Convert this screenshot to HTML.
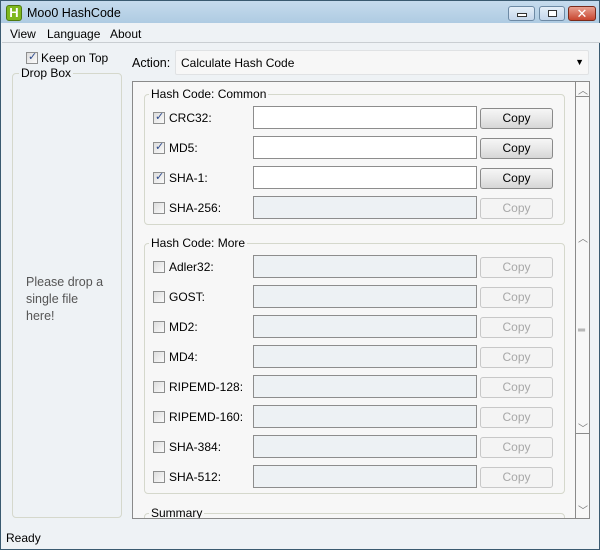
<!DOCTYPE html>
<html><head><style>
*{box-sizing:border-box;margin:0;padding:0}
body{width:600px;height:550px;overflow:hidden;font-family:"Liberation Sans","DejaVu Sans",sans-serif;font-size:12px;color:#000;background:#1b6f99;position:relative}
.win{position:absolute;left:0;top:0;width:600px;height:550px;border:1px solid #3a5a70;background:linear-gradient(#c6dbed,#aecbe2 22px,#eef2f5 22px)}
.abs{position:absolute}
.title{left:26px;top:5px;font-size:12.5px}
.icon{left:5px;top:4px;width:16px;height:16px;background:#7fb81f;border:1px solid #4e7a10;border-radius:3px;color:#fff;font-weight:bold;font-size:13px;line-height:14px;text-align:center}
.tb{top:5px;height:15px;border:1px solid #6d8aa5;border-radius:3px;background:linear-gradient(#e4eef8,#c4d6ea)}
.menu{top:22px;left:1px;width:598px;height:20px;background:#eef2f5;border-bottom:1px solid #c9ced2}
.menu span{position:absolute;top:4px}
.cb{width:12px;height:12px;border:1px solid #8e8f8f;background:linear-gradient(135deg,#ddd,#fafafa)}
.cb.on::after{content:"✓";position:absolute;left:1px;top:-3px;font-size:11px;color:#2c4a8c;font-weight:bold}
.grp{border:1px solid #d5d8cc;border-radius:4px}
.leg{background:#eef2f5;padding:0 2px}
.panel{left:131px;top:80px;width:458px;height:438px;border:1px solid #8a8a8a;background:#f7f7f7;overflow:hidden}
.panel .leg{background:#f7f7f7}
.txt{width:224px;height:23px;border:1px solid #8d8d8d;background:#fff}
.txt.off{background:#edf1f4}
.btn{width:73px;height:21px;border:1px solid #8a8a8a;border-radius:3px;background:linear-gradient(#f6f6f6,#e8e8e8 50%,#d6d6d6);text-align:center;line-height:19px}
.btn.off{border-color:#c8c8c8;background:#f4f4f4;color:#a8a8a8}
.sb{left:442px;top:0;width:15px;height:436px;border-left:1px solid #8a8a8a;background:#f7f7f7}
.car{position:absolute;left:2px;font-size:10px;color:#777}
</style></head><body><div class="win">
<div class="abs icon">H</div>
<div class="abs title">Moo0 HashCode</div>
<div class="abs tb" style="left:507px;width:27px"><div class="abs" style="left:8px;top:6px;width:10px;height:4px;border:1px solid #333;background:#fff"></div></div>
<div class="abs tb" style="left:538px;width:26px"><div class="abs" style="left:8px;top:3px;width:9px;height:7px;border:1px solid #333;background:#fff"></div></div>
<div class="abs tb" style="left:567px;width:28px;background:linear-gradient(#e8a090,#c8452f);border-color:#7a2a1a;color:#fff;font-weight:bold;text-align:center;line-height:13px;font-size:13px">✕</div>
<div class="abs menu"><span style="left:8px">View</span><span style="left:45px">Language</span><span style="left:108px">About</span></div>

<div class="abs cb on" style="left:25px;top:51px"></div>
<div class="abs" style="left:40px;top:50px">Keep on Top</div>
<div class="abs grp" style="left:11px;top:72px;width:110px;height:445px"></div>
<div class="abs leg" style="left:18px;top:65px">Drop Box</div>
<div class="abs" style="left:25px;top:273px;color:#555;line-height:17px;width:84px;font-size:12.5px">Please drop a single file here!</div>

<div class="abs" style="left:131px;top:55px;font-size:12.5px">Action:</div>
<div class="abs" style="left:174px;top:49px;width:414px;height:25px;border:1px solid #e0e2e4;border-radius:2px;background:#f7f7f7"><span class="abs" style="left:5px;top:5px">Calculate Hash Code</span><span class="abs" style="right:4px;top:6px;font-size:9px">▼</span></div>

<div class="abs panel">
<div class="abs grp" style="left:11px;top:12px;width:421px;height:131px"></div>
<div class="abs leg" style="left:16px;top:5px">Hash Code: Common</div>
<div class="abs grp" style="left:11px;top:161px;width:421px;height:251px"></div>
<div class="abs leg" style="left:16px;top:154px">Hash Code: More</div>
<div class="abs grp" style="left:11px;top:431px;width:421px;height:30px"></div>
<div class="abs leg" style="left:16px;top:424px">Summary</div>
<div id="rows"></div>
<div class="abs sb">
<div class="abs" style="left:0;top:14px;width:14px;border-top:1px solid #8a8a8a"></div>
<span class="car" style="top:0px">︿</span>
<span class="car" style="top:148px">︿</span>
<span class="car" style="top:243px">═</span>
<span class="car" style="top:338px">﹀</span>
<div class="abs" style="left:0;top:351px;width:14px;border-top:1px solid #8a8a8a"></div>
<span class="car" style="top:420px">﹀</span>
</div>
</div>
<div class="abs" style="left:5px;top:530px">Ready</div>
</div>
<script>
var rows=[["CRC32:",1],["MD5:",1],["SHA-1:",1],["SHA-256:",0],["Adler32:",0],["GOST:",0],["MD2:",0],["MD4:",0],["RIPEMD-128:",0],["RIPEMD-160:",0],["SHA-384:",0],["SHA-512:",0]];
var h="";rows.forEach(function(r,i){var y=(i<4?36+i*30:185+(i-4)*30);
h+='<div class="abs cb'+(r[1]?' on':'')+'" style="left:20px;top:'+(y-6)+'px"></div>';
h+='<div class="abs" style="left:36px;top:'+(y-7)+'px">'+r[0]+'</div>';
h+='<div class="abs txt'+(r[1]?'':' off')+'" style="left:120px;top:'+(y-12)+'px"></div>';
h+='<div class="abs btn'+(r[1]?'':' off')+'" style="left:347px;top:'+(y-10)+'px">Copy</div>';});
document.getElementById("rows").innerHTML=h;
</script>
</body></html>
